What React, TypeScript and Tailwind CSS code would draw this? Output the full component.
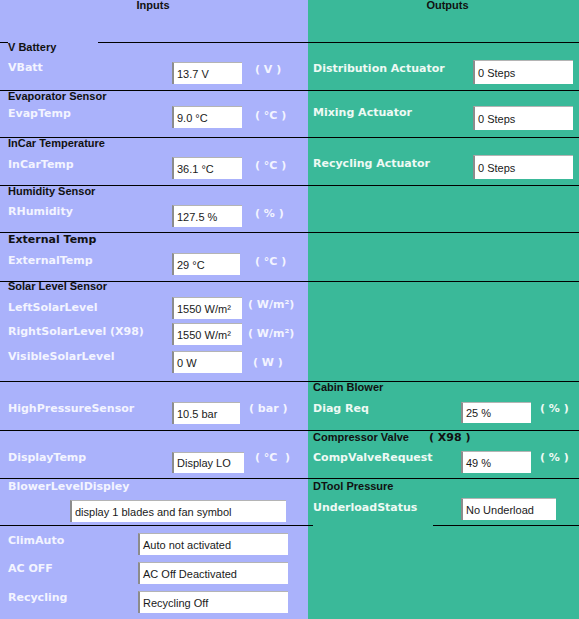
import React from 'react';

const LB = "font-['DejaVu_Sans',sans-serif] font-bold text-[11px] leading-[13px] text-[#f3f4ff] whitespace-pre";
const LG = "font-['DejaVu_Sans',sans-serif] font-bold text-[11px] leading-[13px] text-[#eef9f4] whitespace-pre";
const HD = "font-['Liberation_Sans',Arial,sans-serif] font-bold text-[11px] leading-[11px] text-[#111] whitespace-pre";
const HD2 = "font-['DejaVu_Sans',sans-serif] font-bold text-[11px] leading-[13px] text-[#111] whitespace-pre";

function Box({ className, children }: { className: string; children: React.ReactNode }) {
  return (
    <div
      className={`flex items-center bg-white border-l-2 border-t border-l-[#8c8c8c] border-t-[#b4b4b4] pl-[3px] pt-px font-['Liberation_Sans',Arial,sans-serif] text-[11px] leading-[13px] text-[#1a1a1a] whitespace-nowrap ${className}`}
    >
      {children}
    </div>
  );
}

function Section({ h, left, right }: { h: string; left?: React.ReactNode; right?: React.ReactNode }) {
  return (
    <div className={`flex ${h}`}>
      <div className="w-[308px] bg-[#aab2fb] flex flex-col">{left}</div>
      <div className="flex-1 bg-[#3ab999] flex flex-col">{right}</div>
    </div>
  );
}

const Rule = () => <div className="h-px bg-black" />;

export default function App() {
  return (
    <div className="w-[579px] h-[619px] flex flex-col overflow-hidden">
      {/* titles */}
      <Section
        h="h-[42px]"
        left={<div className={`${HD} text-center pr-[2px]`}>Inputs</div>}
        right={<div className={`${HD} text-center pl-[8px]`}>Outputs</div>}
      />
      <div className="flex h-px">
        <div className="w-[8px] bg-black" />
        <div className="w-[90px] bg-[#aab2fb]" />
        <div className="flex-1 bg-black" />
      </div>

      {/* V Battery */}
      <Section
        h="h-[47px]"
        left={
          <div className="pl-2">
            <div className={`${HD} -mt-px`}>V Battery</div>
            <div className="flex items-start mt-[8px]">
              <div className={`${LB} w-[164px]`}>VBatt</div>
              <div className="w-[76px]"><Box className="mt-px w-[70px] h-[22px]">13.7 V</Box></div>
              <div className={`${LB} ml-[7px] mt-[2px]`}>( V )</div>
            </div>
          </div>
        }
        right={
          <div className="flex items-start pl-[5px] pt-[17px]">
            <div className={`${LG} w-[160px] mt-[2px]`}>Distribution Actuator</div>
            <Box className="w-[100px] h-[24px]">0 Steps</Box>
          </div>
        }
      />
      <Rule />

      {/* Evaporator */}
      <Section
        h="h-[46px]"
        left={
          <div className="pl-2">
            <div className={HD}>Evaporator Sensor</div>
            <div className="flex items-start mt-[4px]">
              <div className={`${LB} w-[164px] mt-px`}>EvapTemp</div>
              <div className="w-[76px]"><Box className="w-[70px] h-[22px]">9.0 °C</Box></div>
              <div className={`${LB} ml-[7px] mt-[3px]`}>( °C )</div>
            </div>
          </div>
        }
        right={
          <div className="flex items-start pl-[5px] pt-[15px]">
            <div className={`${LG} w-[160px]`}>Mixing Actuator</div>
            <Box className="w-[100px] h-[24px]">0 Steps</Box>
          </div>
        }
      />
      <Rule />

      {/* InCar */}
      <Section
        h="h-[47px]"
        left={
          <div className="pl-2">
            <div className={HD}>InCar Temperature</div>
            <div className="flex items-start mt-[8px]">
              <div className={`${LB} w-[164px] mt-px`}>InCarTemp</div>
              <div className="w-[76px]"><Box className="w-[70px] h-[22px]">36.1 °C</Box></div>
              <div className={`${LB} ml-[7px] mt-[2px]`}>( °C )</div>
            </div>
          </div>
        }
        right={
          <div className="flex items-start pl-[5px] pt-[17px]">
            <div className={`${LG} w-[160px] mt-[2px]`}>Recycling Actuator</div>
            <Box className="w-[100px] h-[24px]">0 Steps</Box>
          </div>
        }
      />
      <Rule />

      {/* Humidity */}
      <Section
        h="h-[46px]"
        left={
          <div className="pl-2">
            <div className={HD}>Humidity Sensor</div>
            <div className="flex items-start mt-[8px]">
              <div className={`${LB} w-[164px]`}>RHumidity</div>
              <div className="w-[76px]"><Box className="w-[70px] h-[22px]">127.5 %</Box></div>
              <div className={`${LB} ml-[7px] mt-[2px]`}>( % )</div>
            </div>
          </div>
        }
      />
      <Rule />

      {/* External */}
      <Section
        h="h-[48px]"
        left={
          <div className="pl-2">
            <div className={HD2}>External Temp</div>
            <div className="flex items-start mt-[7px]">
              <div className={`${LB} w-[164px] mt-px`}>ExternalTemp</div>
              <div className="w-[76px]"><Box className="w-[68px] h-[22px]">29 °C</Box></div>
              <div className={`${LB} ml-[7px] mt-[2px]`}>( °C )</div>
            </div>
          </div>
        }
      />
      <Rule />

      {/* Solar */}
      <Section
        h="h-[99px]"
        left={
          <div className="pl-2">
            <div className={`${HD} -mt-px`}>Solar Level Sensor</div>
            <div className="flex items-start mt-[5px]">
              <div className={`${LB} w-[164px] mt-[4px]`}>LeftSolarLevel</div>
              <div className="w-[76px]"><Box className="w-[70px] h-[22px]">1550 W/m²</Box></div>
              <div className={`${LB} mt-px`}>( W/m²)</div>
            </div>
            <div className="flex items-start mt-[4px]">
              <div className={`${LB} w-[164px] mt-[2px]`}>RightSolarLevel (X98)</div>
              <div className="w-[76px]"><Box className="w-[70px] h-[22px]">1550 W/m²</Box></div>
              <div className={`${LB} mt-[4px]`}>( W/m²)</div>
            </div>
            <div className="flex items-start mt-[5px]">
              <div className={`${LB} w-[164px]`}>VisibleSolarLevel</div>
              <div className="w-[76px]"><Box className="mt-px w-[70px] h-[22px]">0 W</Box></div>
              <div className={`${LB} ml-[5px] mt-[6px]`}>( W )</div>
            </div>
          </div>
        }
      />
      <Rule />

      {/* High pressure / Cabin blower */}
      <Section
        h="h-[48px]"
        left={
          <div className="flex items-start pl-2 pt-[20px]">
            <div className={`${LB} w-[164px]`}>HighPressureSensor</div>
            <div className="w-[76px]"><Box className="w-[68px] h-[22px]">10.5 bar</Box></div>
            <div className={`${LB} ml-px`}>( bar )</div>
          </div>
        }
        right={
          <div className="pl-[5px]">
            <div className={HD}>Cabin Blower</div>
            <div className="flex items-start mt-[9px]">
              <div className={`${LG} w-[148px]`}>Diag Req</div>
              <div className="w-[79px]"><Box className="w-[70px] h-[21px]">25 %</Box></div>
              <div className={LG}>( % )</div>
            </div>
          </div>
        }
      />
      <Rule />

      {/* Display temp / Compressor */}
      <Section
        h="h-[47px]"
        left={
          <div className="flex items-start pl-2 pt-[20px]">
            <div className={`${LB} w-[164px]`}>DisplayTemp</div>
            <div className="w-[76px]"><Box className="mt-px w-[72px] h-[21px]">Display LO</Box></div>
            <div className={`${LB} ml-[7px]`}>( °C  )</div>
          </div>
        }
        right={
          <div className="pl-[5px]">
            <div className="flex items-baseline h-[11px]">
              <div className={HD}>Compressor Valve</div>
              <div className={`${HD2} leading-[11px] ml-[20px]`}>( X98 )</div>
            </div>
            <div className="flex items-start mt-[9px]">
              <div className={`${LG} w-[148px]`}>CompValveRequest</div>
              <div className="w-[79px]"><Box className="w-[70px] h-[22px]">49 %</Box></div>
              <div className={LG}>( % )</div>
            </div>
          </div>
        }
      />
      <Rule />

      {/* Blower display / DTool */}
      <Section
        h="h-[46px]"
        left={
          <div className="pl-2">
            <div className={`${LB} mt-px`}>BlowerLevelDispley</div>
            <Box className="ml-[62px] mt-[7px] w-[216px] h-[22px]">display 1 blades and fan symbol</Box>
          </div>
        }
        right={
          <div className="pl-[5px]">
            <div className={`${HD} mt-[2px]`}>DTool Pressure</div>
            <div className="flex items-start mt-[6px]">
              <div className={`${LG} w-[148px] mt-[3px]`}>UnderloadStatus</div>
              <Box className="w-[95px] h-[22px]">No Underload</Box>
            </div>
          </div>
        }
      />
      <div className="flex h-px">
        <div className="w-[313px] bg-black" />
        <div className="w-[120px] bg-[#3ab999]" />
        <div className="flex-1 bg-black" />
      </div>

      {/* Toggles */}
      <Section
        h="h-[93px]"
        left={
          <div className="pl-2 pt-[7px] flex flex-col gap-[7px]">
            <div className="flex items-start">
              <div className={`${LB} w-[130px] mt-px`}>ClimAuto</div>
              <Box className="w-[150px] h-[22px]">Auto not activated</Box>
            </div>
            <div className="flex items-start">
              <div className={`${LB} w-[130px]`}>AC OFF</div>
              <Box className="w-[150px] h-[22px]">AC Off Deactivated</Box>
            </div>
            <div className="flex items-start">
              <div className={`${LB} w-[130px]`}>Recycling</div>
              <Box className="w-[150px] h-[22px]">Recycling Off</Box>
            </div>
          </div>
        }
      />
    </div>
  );
}
